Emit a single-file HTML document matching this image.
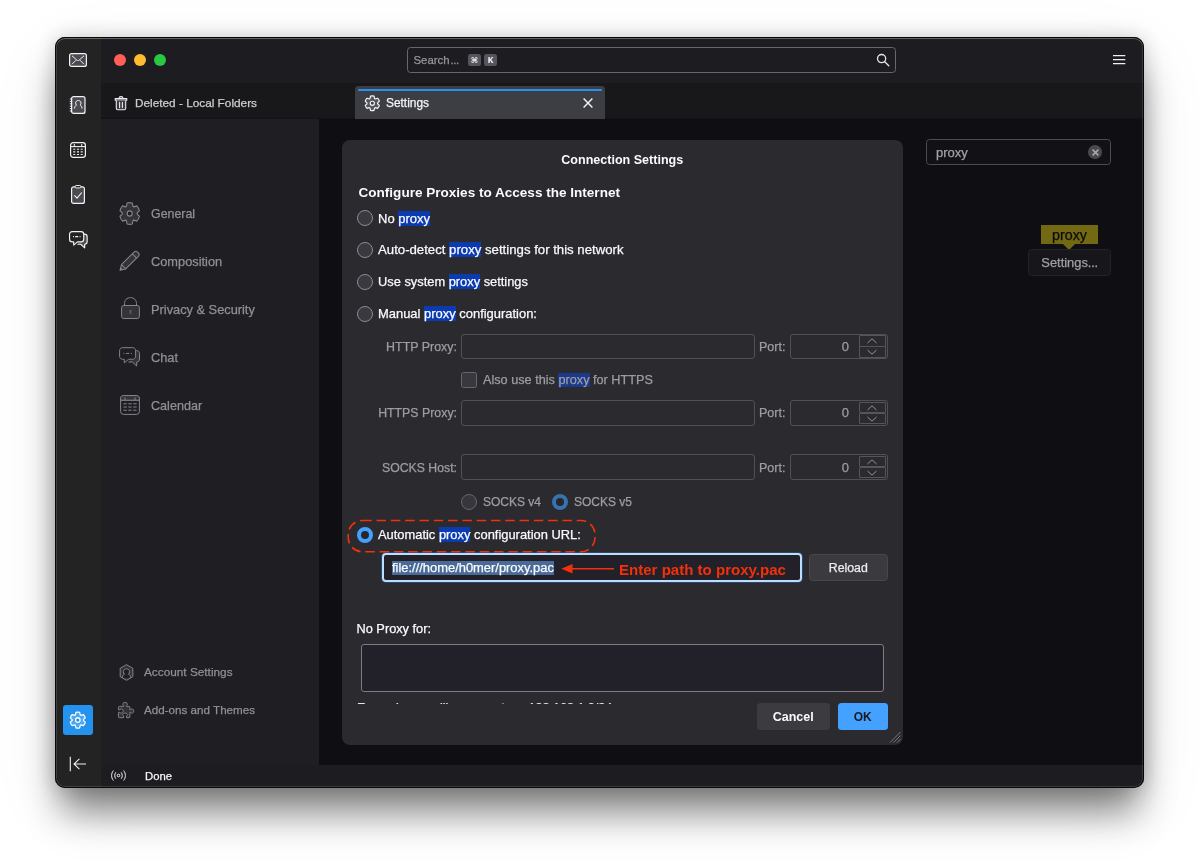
<!DOCTYPE html>
<html><head><meta charset="utf-8"><title>Settings</title>
<style>
*{box-sizing:border-box;margin:0;padding:0}
html,body{width:1199px;height:861px;overflow:hidden;background:#fff}
body{font-family:"Liberation Sans",sans-serif;font-size:13px;color:#fbfbfe;position:relative}
#win{position:absolute;left:55px;top:37px;width:1089px;height:750.5px;border-radius:10px;background:#1c1b22;
 box-shadow:0 0 20px rgba(0,0,0,.2),0 30px 36px -6px rgba(0,0,0,.45),0 20px 70px rgba(0,0,0,.08);overflow:hidden}
#win::after{content:"";position:absolute;left:0;top:0;right:0;bottom:0;border-radius:10px;border:1px solid rgba(0,0,0,.72);box-shadow:inset 0 1px 0 rgba(255,255,255,.2),inset 0 0 0 1px rgba(255,255,255,.13);pointer-events:none}
#pg{position:absolute;left:-55px;top:-37px;width:1199px;height:861px;will-change:transform}
#pg div,#pg svg,#pg span{position:absolute}
.t{white-space:pre;line-height:16px;height:16px;-webkit-text-stroke:0.25px currentColor}
.b{font-weight:700;-webkit-text-stroke:0!important}
.hl{position:static!important;background:#0a3bb1}
.g{color:#8f8f97}
.dis{color:#9d9da4}
.inp{border:1px solid #505057;border-radius:3px}
.radio{width:16px;height:16px;border-radius:50%;border:1px solid #8c8c96;background:#39393f}
svg{overflow:visible}
</style></head><body>
<div id="win"><div id="pg">
<div style="left:55px;top:37px;width:45.5px;height:751px;background:#232324"></div>
<div style="left:100.5px;top:37px;width:1044px;height:46px;background:#1c1c21"></div>
<div style="left:100.5px;top:82.5px;width:1044px;height:36.5px;background:#18181b;border-bottom:1px solid #121217"></div>
<div style="left:100.5px;top:119px;width:218.5px;height:646px;background:#1e1e23"></div>
<div style="left:319px;top:119px;width:825px;height:646px;background:#0e0e13"></div>
<div style="left:100.5px;top:765px;width:1044px;height:22px;background:#1c1c21"></div>
<div style="left:114px;top:54px;width:12px;height:12px;border-radius:50%;background:#ff5f57"></div>
<div style="left:134px;top:54px;width:12px;height:12px;border-radius:50%;background:#febc2e"></div>
<div style="left:154px;top:54px;width:12px;height:12px;border-radius:50%;background:#28c840"></div>
<div style="left:407px;top:47px;width:489px;height:26px;border:1px solid #67676f;border-radius:3.5px;background:#1c1c21"></div>
<span class="t " style="left:413.5px;top:52px;font-size:11.4px;color:#96969e">Search<span style="position:static;letter-spacing:-0.4px;margin-left:1px">...</span></span>
<div style="left:468px;top:54px;width:12.5px;height:12px;border-radius:2.5px;background:#55555e"></div>
<div style="left:484px;top:54px;width:13px;height:12px;border-radius:2.5px;background:#55555e"></div>
<span class="t b" style="left:468px;top:53px;width:12.5px;text-align:center;font-size:8px;font-family:'DejaVu Sans',sans-serif;color:#f0f0f4">⌘</span>
<span class="t b" style="left:484px;top:53px;width:13px;text-align:center;font-size:9.5px;font-family:'Liberation Mono',monospace;color:#f0f0f4">K</span>
<svg style="left:876px;top:53px" width="14" height="14" viewBox="0 0 14 14"><circle cx="5.6" cy="5.6" r="4.1" fill="none" stroke="#e8e8ec" stroke-width="1.3"/><path d="M8.7 8.7L12.8 12.8" stroke="#e8e8ec" stroke-width="1.3" stroke-linecap="round"/></svg>
<svg style="left:1113px;top:54px" width="12" height="11" viewBox="0 0 12 11"><path d="M0 1.5h12.3M0 5.5h12.3M0 9.5h12.3" stroke="#f0f0f4" stroke-width="1.25"/></svg>
<svg style="left:114px;top:95px" width="14" height="16" viewBox="0 0 14 16"><path d="M1.2 3.6h11.6v1.7H1.2zM5 3.4c0-1.2.8-1.8 2-1.8s2 .6 2 1.8" fill="#3a3a40" stroke="#ececf0" stroke-width="1.1" stroke-linejoin="round"/><path d="M2.3 5.5v7.8c0 .9.6 1.5 1.5 1.5h6.4c.9 0 1.5-.6 1.5-1.5V5.5" fill="#3a3a40" stroke="#ececf0" stroke-width="1.1" stroke-linejoin="round"/><path d="M5.6 7.4v5.2M8.4 7.4v5.2" stroke="#ececf0" stroke-width="1.1" stroke-linecap="round"/></svg>
<span class="t " style="left:135px;top:95px;font-size:11.8px;color:#cdcdd3">Deleted - Local Folders</span>
<div style="left:355px;top:86px;width:249.5px;height:33px;background:#3d3e43;border-radius:3.5px 3.5px 0 0"></div>
<div style="left:358px;top:89px;width:243.5px;height:2px;background:#2493ef;border-radius:1px"></div>
<svg style="left:363.7px;top:94.7px" width="16.6" height="16.6" viewBox="0 0 24 24"><path d="M15.25 5.02L14.56 1.71A10.6 10.6 0 0 0 9.44 1.71L8.75 5.02A7.7 7.7 0 0 0 7.58 5.69L4.37 4.64A10.6 10.6 0 0 0 1.81 9.08L4.33 11.33A7.7 7.7 0 0 0 4.33 12.67L1.81 14.92A10.6 10.6 0 0 0 4.37 19.36L7.58 18.31A7.7 7.7 0 0 0 8.75 18.98L9.44 22.29A10.6 10.6 0 0 0 14.56 22.29L15.25 18.98A7.7 7.7 0 0 0 16.42 18.31L19.63 19.36A10.6 10.6 0 0 0 22.19 14.92L19.67 12.67A7.7 7.7 0 0 0 19.67 11.33L22.19 9.08A10.6 10.6 0 0 0 19.63 4.64L16.42 5.69A7.7 7.7 0 0 0 15.25 5.02 Z" fill="#55555c" stroke="#f4f4f8" stroke-width="1.7" stroke-linejoin="round"/><circle cx="12" cy="12" r="3" fill="#3d3e43" stroke="#f4f4f8" stroke-width="1.7"/></svg>
<span class="t " style="left:386px;top:95px;font-size:11.9px;color:#f4f4f8">Settings</span>
<svg style="left:583px;top:98px" width="10" height="10" viewBox="0 0 10 10"><path d="M.6.6l8.8 8.8M9.4.6L.6 9.4" stroke="#f4f4f8" stroke-width="1.4"/></svg>
<svg style="left:69px;top:53px" width="18" height="14" viewBox="0 0 18 14"><rect x=".6" y=".6" width="16.8" height="12.8" rx="2" fill="#4a4a50" stroke="#f2f2f6" stroke-width="1.2"/><path d="M3 2.8l4.9 4.3c.7.6 1.5.6 2.2 0L15 2.8M3 11.2l4-4M15 11.2l-4-4" fill="none" stroke="#f2f2f6" stroke-width="1"/></svg>
<svg style="left:69px;top:96px" width="17" height="18" viewBox="0 0 17 18"><rect x="2.6" y=".6" width="13.4" height="16.8" rx="2" fill="#4a4a50" stroke="#f2f2f6" stroke-width="1.2"/><path d="M.8 3h2.4M.8 5.4h2.4M.8 7.8h2.4M.8 10.2h2.4M.8 12.6h2.4M.8 15h2.4" stroke="#f2f2f6" stroke-width="1"/><path d="M5.6 12.6c0-2.2 1-3.1 2-3.5-.7-.5-1-1.2-1-2 0-1.5 1.1-2.6 2.7-2.6s2.7 1.1 2.7 2.6c0 .8-.3 1.5-1 2 1 .4 2 1.3 2 3.5" fill="none" stroke="#f2f2f6" stroke-width="1"/></svg>
<svg style="left:70px;top:142px" width="16" height="16" viewBox="0 0 16 16"><rect x=".6" y=".6" width="14.8" height="14.8" rx="2.6" fill="#232324" stroke="#f2f2f6" stroke-width="1.2"/><path d="M.6 4.6h14.8" stroke="#f2f2f6" stroke-width="1.1"/><path d="M4.3 2v2.5M11.7 2v2.5" stroke="#f2f2f6" stroke-width="1"/><path d="M3.3 7.3h2M7 7.3h2M10.7 7.3h2M3.3 9.9h2M7 9.9h2M10.7 9.9h2M3.3 12.5h2M7 12.5h2M10.7 12.5h2" stroke="#f2f2f6" stroke-width="1.1"/></svg>
<svg style="left:71px;top:185px" width="14" height="19" viewBox="0 0 14 19"><rect x=".6" y="1.8" width="12.8" height="16.6" rx="2" fill="#4a4a50" stroke="#f2f2f6" stroke-width="1.2"/><rect x="4" y=".5" width="6" height="2.4" rx="1.2" fill="#232324" stroke="#f2f2f6" stroke-width="1"/><path d="M3.4 10.4l2.6 2.7 4.8-5.6" fill="none" stroke="#f2f2f6" stroke-width="1.1"/></svg>
<svg style="left:68.5px;top:231px" width="19.5" height="17.7" viewBox="0 0 22 20"><path d="M15.5 3.6h2c1.8 0 3 1.2 3 3v5.4c0 1.8-1 3-2.8 3v4l-4.4-4H9.5" fill="#4a4a50" stroke="#f2f2f6" stroke-width="1.3" stroke-linejoin="round"/><path d="M3.6 .7h10c1.8 0 3 1.2 3 3v5.6c0 1.8-1.2 3-3 3H9.5l-4.2 3.6v-3.6H3.6c-1.8 0-3-1.2-3-3V3.7c0-1.8 1.2-3 3-3z" fill="#232324" stroke="#f2f2f6" stroke-width="1.3" stroke-linejoin="round"/><path d="M4.5 6.4h1M7 6.4h3.4M12 6.4h1" stroke="#f2f2f6" stroke-width="1.3"/></svg>
<div style="left:63px;top:705px;width:30px;height:30px;border-radius:3px;background:#2493ef"></div>
<svg style="left:69px;top:710.8px" width="17.6" height="18.2" viewBox="0 0 24 24" preserveAspectRatio="none"><path d="M15.25 5.02L14.56 1.71A10.6 10.6 0 0 0 9.44 1.71L8.75 5.02A7.7 7.7 0 0 0 7.58 5.69L4.37 4.64A10.6 10.6 0 0 0 1.81 9.08L4.33 11.33A7.7 7.7 0 0 0 4.33 12.67L1.81 14.92A10.6 10.6 0 0 0 4.37 19.36L7.58 18.31A7.7 7.7 0 0 0 8.75 18.98L9.44 22.29A10.6 10.6 0 0 0 14.56 22.29L15.25 18.98A7.7 7.7 0 0 0 16.42 18.31L19.63 19.36A10.6 10.6 0 0 0 22.19 14.92L19.67 12.67A7.7 7.7 0 0 0 19.67 11.33L22.19 9.08A10.6 10.6 0 0 0 19.63 4.64L16.42 5.69A7.7 7.7 0 0 0 15.25 5.02 Z" fill="#4aa8f5" stroke="#fff" stroke-width="1.7" stroke-linejoin="round"/><circle cx="12" cy="12" r="3.1" fill="#2493ef" stroke="#fff" stroke-width="1.7"/></svg>
<svg style="left:69px;top:756px" width="18" height="16" viewBox="0 0 18 16"><path d="M1.3 .8v14.4M5 8h12M10.4 2.8L5 8l5.4 5.2" fill="none" stroke="#f2f2f6" stroke-width="1.1"/></svg>
<svg style="left:110px;top:770px" width="17" height="11" viewBox="0 0 17 11"><circle cx="8.5" cy="5.5" r="1.3" fill="none" stroke="#f2f2f6" stroke-width="1"/><path d="M5.6 2.6c-1.2 1.6-1.2 4.2 0 5.8M11.4 2.6c1.2 1.6 1.2 4.2 0 5.8M3.2 .8c-2.2 2.6-2.2 6.8 0 9.4M13.8 .8c2.2 2.6 2.2 6.8 0 9.4" fill="none" stroke="#f2f2f6" stroke-width="1" stroke-linecap="round"/></svg>
<span class="t " style="left:145px;top:768px;font-size:11.3px;color:#f4f4f8">Done</span>
<svg style="left:119.3px;top:201.5px" width="21.4" height="23" viewBox="0 0 24 24" preserveAspectRatio="none"><path d="M15.64 4.54L14.92 1.09A11.3 11.3 0 0 0 9.08 1.09L8.36 4.54A8.3 8.3 0 0 0 7.36 5.12L4.01 4.01A11.3 11.3 0 0 0 1.09 9.08L3.72 11.42A8.3 8.3 0 0 0 3.72 12.58L1.09 14.92A11.3 11.3 0 0 0 4.01 19.99L7.36 18.88A8.3 8.3 0 0 0 8.36 19.46L9.08 22.91A11.3 11.3 0 0 0 14.92 22.91L15.64 19.46A8.3 8.3 0 0 0 16.64 18.88L19.99 19.99A11.3 11.3 0 0 0 22.91 14.92L20.28 12.58A8.3 8.3 0 0 0 20.28 11.42L22.91 9.08A11.3 11.3 0 0 0 19.99 4.01L16.64 5.12A8.3 8.3 0 0 0 15.64 4.54 Z" fill="#333338" stroke="#85858d" stroke-width="1.2" stroke-linejoin="round"/><circle cx="12" cy="12" r="2.8" fill="#1e1e23" stroke="#85858d" stroke-width="1.2"/></svg>
<span class="t g" style="left:151px;top:206px;font-size:12.4px;">General</span>
<svg style="left:119.2px;top:250.3px" width="21.4" height="21.4" viewBox="0 0 21 21"><path d="M1 20l1.4-5.6L14.8 2c1-1 2.4-1 3.4 0l.8.8c1 1 1 2.4 0 3.4L6.6 18.6z" fill="#333338" stroke="#85858d" stroke-width="1" stroke-linejoin="round"/><path d="M2.4 14.4l4.2 4.2M13 3.8l4.2 4.2" fill="none" stroke="#85858d" stroke-width="1"/><path d="M1 20l.8-3 2.2 2.2z" fill="#85858d"/></svg>
<span class="t g" style="left:151px;top:254px;font-size:12.8px;">Composition</span>
<svg style="left:120.5px;top:297px" width="19" height="22" viewBox="0 0 19 22"><path d="M3.5 8.5V6.6c0-3.4 2.4-6 6-6s6 2.6 6 6v1.9" fill="none" stroke="#85858d" stroke-width="1"/><rect x=".6" y="8.5" width="17.8" height="13" rx="2.2" fill="#333338" stroke="#85858d" stroke-width="1"/><path d="M9.5 13.2v1.2M9.5 15.4v1.2" stroke="#85858d" stroke-width="1.6"/></svg>
<span class="t g" style="left:151px;top:302px;font-size:12.8px;">Privacy &amp; Security</span>
<svg style="left:119px;top:347px" width="22" height="20" viewBox="0 0 22 20"><path d="M15.5 3.6h2c1.8 0 3 1.2 3 3v5.4c0 1.8-1 3-2.8 3v4l-4.4-4H9.5" fill="#333338" stroke="#85858d" stroke-width="1" stroke-linejoin="round"/><path d="M3.6 .7h10c1.8 0 3 1.2 3 3v5.6c0 1.8-1.2 3-3 3H9.5l-4.2 3.6v-3.6H3.6c-1.8 0-3-1.2-3-3V3.7c0-1.8 1.2-3 3-3z" fill="#1e1e23" stroke="#85858d" stroke-width="1" stroke-linejoin="round"/><path d="M4.5 6.4h1M7 6.4h3.4M12 6.4h1" stroke="#85858d" stroke-width="1"/></svg>
<span class="t g" style="left:151px;top:350px;font-size:12.8px;">Chat</span>
<svg style="left:120px;top:395px" width="20" height="20" viewBox="0 0 20 20"><rect x=".6" y=".6" width="18.8" height="18.8" rx="3" fill="#1e1e23" stroke="#85858d" stroke-width="1"/><path d="M.6 5.2h18.8" stroke="#85858d" stroke-width="1"/><path d="M.6 3.6c0-1.8 1.2-3 3-3h12.8c1.8 0 3 1.2 3 3v1.6H.6z" fill="#333338" stroke="#85858d" stroke-width="1"/><path d="M5 2.4v2.8M15 2.4v2.8" stroke="#85858d" stroke-width="1"/><path d="M3.4 8.8h3.4M8.3 8.8h3.4M13.2 8.8h3.4M3.4 12h3.4M8.3 12h3.4M13.2 12h3.4M3.4 15.2h3.4M8.3 15.2h3.4M13.2 15.2h3.4" stroke="#85858d" stroke-width="1"/></svg>
<span class="t g" style="left:151px;top:398px;font-size:12.6px;">Calendar</span>
<svg style="left:118.5px;top:663.5px" width="15" height="17" viewBox="0 0 15 17"><path d="M7.5 .7l6.3 3.6v8.4l-6.3 3.6-6.3-3.6V4.3z" fill="#333338" stroke="#85858d" stroke-width="1" stroke-linejoin="round"/><path d="M3.4 13.8c0-2.2 1-3.2 2.2-3.6-.8-.6-1.2-1.4-1.2-2.4 0-1.8 1.3-3 3.1-3s3.1 1.2 3.1 3c0 1-.4 1.8-1.2 2.4 1.2.4 2.2 1.4 2.2 3.6" fill="#1e1e23" stroke="#85858d" stroke-width="1"/></svg>
<span class="t g" style="left:144px;top:664px;font-size:11.8px;">Account Settings</span>
<svg style="left:117.6px;top:701.6px" width="16.2" height="16.2" viewBox="0 0 17 17"><path d="M1.5 4.6H5.9V3.9C4.6 3.6 4.3 .5 7.45 .5C10.6 .5 10.3 3.6 9 3.9V4.6H11.5a1 1 0 0 1 1 1V8.3H13.2C13.5 7 16.5 6.7 16.5 9.5C16.5 12.3 13.5 12 13.2 10.8H12.5V15.5a1 1 0 0 1-1 1H9V14.6C10.3 14.3 10.6 11.6 7.45 11.6C4.3 11.6 4.6 14.3 5.9 14.6V16.5H1.5a1 1 0 0 1-1-1V10.8H1.8C2.1 12 5.4 12.3 5.4 9.5C5.4 6.7 2.1 7 1.8 8.3H.5V5.6a1 1 0 0 1 1-1z" fill="#333338" stroke="#85858d" stroke-width="1" stroke-linejoin="round"/></svg>
<span class="t g" style="left:144px;top:702px;font-size:11.65px;">Add-ons and Themes</span>
<div style="left:926px;top:139px;width:185px;height:26px;border:1px solid #4c4c53;border-radius:3.5px;background:#111116"></div>
<span class="t " style="left:936px;top:145px;font-size:13px;color:#a2a2a8">proxy</span>
<div style="left:1088px;top:145px;width:14px;height:14px;border-radius:50%;background:#4a4a4e"></div>
<svg style="left:1091.5px;top:148.5px" width="7" height="7" viewBox="0 0 7 7"><path d="M.6.6l5.8 5.8M6.4.6L.6 6.4" stroke="#a8a8ac" stroke-width="1.5"/></svg>
<div style="left:1041px;top:225px;width:57px;height:19px;background:#736912"></div>
<svg style="left:1063px;top:243.5px" width="12" height="6" viewBox="0 0 12 6"><path d="M0 0h12L6 6z" fill="#736912"/></svg>
<span class="t " style="left:1041px;top:227px;font-size:14.3px;width:57px;text-align:center;color:#0c0c0d">proxy</span>
<div style="left:1028px;top:249px;width:83px;height:26.5px;border-radius:3.5px;background:#16161b;border:1px solid #222227"></div>
<span class="t " style="left:1028px;top:255px;font-size:12.9px;width:83px;text-align:center;color:#a0a0a6">Settings<span style="position:static;letter-spacing:-0.3px">...</span></span>
<div style="left:342px;top:140px;width:560.5px;height:604.75px;border-radius:8px;background:#2a2a2f"></div>
<span class="t b" style="left:342px;top:152px;font-size:12.55px;width:560.5px;text-align:center">Connection Settings</span>
<span class="t b" style="left:358.5px;top:185px;font-size:13.55px;">Configure Proxies to Access the Internet</span>
<div class="radio" style="left:357px;top:210px"></div>
<span class="t " style="left:378px;top:211px;font-size:13px;">No <span class="hl">proxy</span></span>
<div class="radio" style="left:357px;top:241.5px"></div>
<span class="t " style="left:378px;top:242px;font-size:13.2px;">Auto-detect <span class="hl">proxy</span> settings for this network</span>
<div class="radio" style="left:357px;top:273.5px"></div>
<span class="t " style="left:378px;top:274px;font-size:12.85px;">Use system <span class="hl">proxy</span> settings</span>
<div class="radio" style="left:357px;top:305.5px"></div>
<span class="t " style="left:378px;top:306px;font-size:12.95px;">Manual <span class="hl">proxy</span> configuration:</span>
<span class="t dis" style="right:742px;top:339px;font-size:12.45px;">HTTP Proxy:</span>
<div class="inp" style="left:461px;top:333.75px;width:293.5px;height:25.5px"></div>
<span class="t dis" style="left:759px;top:339px;font-size:12.5px;">Port:</span>
<div class="inp" style="left:790px;top:333.75px;width:97.5px;height:25.5px"></div>
<span class="t dis" style="right:350px;top:339px;font-size:13px;">0</span>
<div style="left:859px;top:335.25px;width:26.5px;height:11.5px;border:1px solid #55555c;border-radius:1px"></div>
<div style="left:859px;top:346.25px;width:26.5px;height:11.5px;border:1px solid #55555c;border-radius:1px"></div>
<svg style="left:867px;top:338.25px" width="10" height="17" viewBox="0 0 10 17"><path d="M.5 5L5 .8 9.5 5M.5 12L5 16.2 9.5 12" fill="none" stroke="#93939a" stroke-width="1"/></svg>
<div style="left:461px;top:372px;width:16px;height:16px;border-radius:2.5px;border:1px solid #66666e;background:#38383e"></div>
<span class="t dis" style="left:483px;top:372px;font-size:12.7px;">Also use this <span class="hl" style="background:#1b3a8c">proxy</span> for HTTPS</span>
<span class="t dis" style="right:742px;top:405px;font-size:12.35px;">HTTPS Proxy:</span>
<div class="inp" style="left:461px;top:400px;width:293.5px;height:25.5px"></div>
<span class="t dis" style="left:759px;top:405px;font-size:12.5px;">Port:</span>
<div class="inp" style="left:790px;top:400px;width:97.5px;height:25.5px"></div>
<span class="t dis" style="right:350px;top:405px;font-size:13px;">0</span>
<div style="left:859px;top:401.5px;width:26.5px;height:11.5px;border:1px solid #55555c;border-radius:1px"></div>
<div style="left:859px;top:412.5px;width:26.5px;height:11.5px;border:1px solid #55555c;border-radius:1px"></div>
<svg style="left:867px;top:404.5px" width="10" height="17" viewBox="0 0 10 17"><path d="M.5 5L5 .8 9.5 5M.5 12L5 16.2 9.5 12" fill="none" stroke="#93939a" stroke-width="1"/></svg>
<span class="t dis" style="right:742px;top:460px;font-size:12.27px;">SOCKS Host:</span>
<div class="inp" style="left:461px;top:454.25px;width:293.5px;height:25.5px"></div>
<span class="t dis" style="left:759px;top:460px;font-size:12.5px;">Port:</span>
<div class="inp" style="left:790px;top:454.25px;width:97.5px;height:25.5px"></div>
<span class="t dis" style="right:350px;top:460px;font-size:13px;">0</span>
<div style="left:859px;top:455.75px;width:26.5px;height:11.5px;border:1px solid #55555c;border-radius:1px"></div>
<div style="left:859px;top:466.75px;width:26.5px;height:11.5px;border:1px solid #55555c;border-radius:1px"></div>
<svg style="left:867px;top:458.75px" width="10" height="17" viewBox="0 0 10 17"><path d="M.5 5L5 .8 9.5 5M.5 12L5 16.2 9.5 12" fill="none" stroke="#93939a" stroke-width="1"/></svg>
<div class="radio" style="left:461px;top:493.5px;border-color:#66666e;background:#36363c"></div>
<span class="t dis" style="left:483px;top:494px;font-size:12px;">SOCKS v4</span>
<div style="left:552px;top:493.5px;width:16px;height:16px;border-radius:50%;border:4px solid #3872ae;background:#27272c"></div>
<span class="t dis" style="left:574px;top:494px;font-size:12px;">SOCKS v5</span>
<div style="left:357px;top:527px;width:16px;height:16px;border-radius:50%;border:4px solid #45a1ff;background:#27272c"></div>
<span class="t " style="left:378px;top:527px;font-size:12.9px;">Automatic <span class="hl">proxy</span> configuration URL:</span>
<svg style="left:347px;top:519px" width="250" height="34" viewBox="0 0 250 34"><rect x="1.25" y="1.5" width="246.75" height="31.25" rx="14" fill="none" stroke="#f4300c" stroke-width="1.6" stroke-dasharray="9.5 4.8"/></svg>
<div style="left:382px;top:553px;width:420px;height:28.5px;border-radius:4px;border:2px solid #b9deff;background:#22212a;box-shadow:0 0 0 1px rgba(60,120,200,.35)"></div>
<div style="left:391.5px;top:560.5px;width:162.5px;height:14.5px;background:#4a6b98"></div>
<span class="t " style="left:392px;top:560px;font-size:12.92px;">file:///home/h0mer/proxy.pac</span>
<svg style="left:561px;top:563px" width="54" height="12" viewBox="0 0 54 12"><path d="M9 5.75H53" stroke="#f4300c" stroke-width="1.6"/><path d="M.3 5.75L11.5 1v9.5z" fill="#f4300c"/></svg>
<span class="t b" style="left:619px;top:562px;font-size:15.05px;color:#f4300c">Enter path to proxy.pac</span>
<div style="left:809px;top:554px;width:78.5px;height:26.5px;border-radius:3.5px;background:#3a3a3f;border:1px solid #47474d"></div>
<span class="t " style="left:809px;top:560px;font-size:12.3px;width:78.5px;text-align:center;color:#ececf0">Reload</span>
<span class="t " style="left:356.5px;top:621px;font-size:12.77px;">No Proxy for:</span>
<div style="left:361px;top:644px;width:522.5px;height:47.5px;border-radius:3px;border:1px solid #7c7c84;background:#22212a"></div>
<div style="left:342px;top:695px;width:560px;height:8.75px;overflow:hidden"><span class="t" style="left:15px;top:5.3px;font-size:12.55px;color:#e4e4ea">Example: .mozilla.org, .net.nz, 192.168.1.0/24</span></div>
<div style="left:757px;top:703px;width:72.5px;height:26.5px;border-radius:3.5px;background:#3b3b40"></div>
<span class="t b" style="left:757px;top:709px;font-size:12.5px;width:72.5px;text-align:center">Cancel</span>
<div style="left:837.75px;top:703px;width:49.75px;height:26.5px;border-radius:3.5px;background:#45a1ff"></div>
<span class="t b" style="left:837.75px;top:709px;font-size:12px;width:49.75px;text-align:center;color:#1a1a22">OK</span>
<svg style="left:889px;top:731px" width="12" height="12" viewBox="0 0 12 12"><path d="M11.5 1L1 11.5M11.5 4.5L4.5 11.5M11.5 8L8 11.5" stroke="#77777d" stroke-width="1"/></svg>
</div></div>
</body></html>
